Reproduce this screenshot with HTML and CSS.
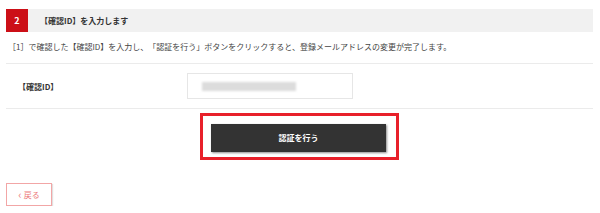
FILE: index.html
```html
<!DOCTYPE html>
<html lang="ja">
  <head>
    <meta charset="UTF-8" />
    <meta name="viewport" content="width=device-width, initial-scale=1.0" />
    <title>確認IDの入力</title>
    <link rel="stylesheet" href="styles.css">
  </head>
  <body>
    <div class="container">
      <div class="step-head">
        <span class="step-num">2</span>
        <h2 class="step-title">【確認ID】を入力します</h2>
      </div>
      <p class="step-desc">
        ［1］で確認した【確認ID】を入力し、「認証を行う」ボタンをクリックすると、登録メールアドレスの変更が完了します。
      </p>
      <div class="form-row">
        <label for="confirm-id">【確認ID】</label>
        <div class="input-box" id="confirm-id">
          <span class="masked"></span>
        </div>
      </div>
      <div class="action">
        <div class="highlight">
          <button type="submit" class="btn-submit">認証を行う</button>
        </div>
      </div>
      <a href="#" class="btn-back"><span class="chev">‹</span>戻る</a>
    </div>
  </body>
</html>
```

FILE: styles.css
```css
* {
  margin: 0;
  padding: 0;
  box-sizing: border-box;
}

body {
  font-family: "Noto Sans CJK JP", "Noto Sans", sans-serif;
  background: #ffffff;
  color: #333;
  text-spacing-trim: space-all;
}

.container {
  width: 600px;
  padding: 9px 7px 0 6px;
}

.step-head {
  display: flex;
  align-items: center;
  height: 23px;
  background: #f1f1f1;
}

.step-num {
  width: 22px;
  height: 23px;
  background: #cc0f17;
  color: #ffffff;
  font-size: 9px;
  font-weight: 700;
  display: flex;
  align-items: center;
  justify-content: center;
}

.step-title {
  margin-left: 12px;
  font-size: 8px;
  font-weight: 700;
  color: #333;
}

.step-desc {
  padding: 8px 2px 9px;
  font-size: 8px;
  line-height: 14px;
  color: #444;
  border-bottom: 1px solid #ebebeb;
}

.form-row {
  display: grid;
  grid-template-columns: 181px 166px;
  align-items: center;
  padding: 9px 0;
  border-bottom: 1px solid #ebebeb;
}

.form-row label {
  padding-left: 12px;
  font-size: 8px;
  font-weight: 700;
  color: #333;
}

.input-box {
  height: 26px;
  border: 1px solid #e6e6e6;
  display: flex;
  align-items: center;
  padding-left: 14px;
}

.masked {
  width: 94px;
  height: 9px;
  background: #dcdcdc;
  filter: blur(1px);
}

.action {
  display: flex;
  justify-content: center;
  margin-top: 4px;
}

.highlight {
  width: 199px;
  height: 47px;
  border: 3px solid #e8202a;
  padding: 6px 10px 7px 8px;
}

.btn-submit {
  width: 175px;
  height: 28px;
  border: none;
  background: #333333;
  color: #ffffff;
  font-family: inherit;
  font-size: 8px;
  font-weight: 700;
  box-shadow: 1px 1px 2px rgba(0, 0, 0, 0.45);
}

.btn-back {
  display: flex;
  align-items: center;
  justify-content: center;
  width: 46px;
  height: 23px;
  margin-top: 23px;
  border: 1px solid #f2a6a6;
  box-shadow: 1px 1px 1px rgba(0, 0, 0, 0.12);
  color: #ec7a7a;
  font-size: 8px;
  text-decoration: none;
}

.chev {
  font-size: 11px;
  line-height: 1;
  margin-right: 2px;
}
```
